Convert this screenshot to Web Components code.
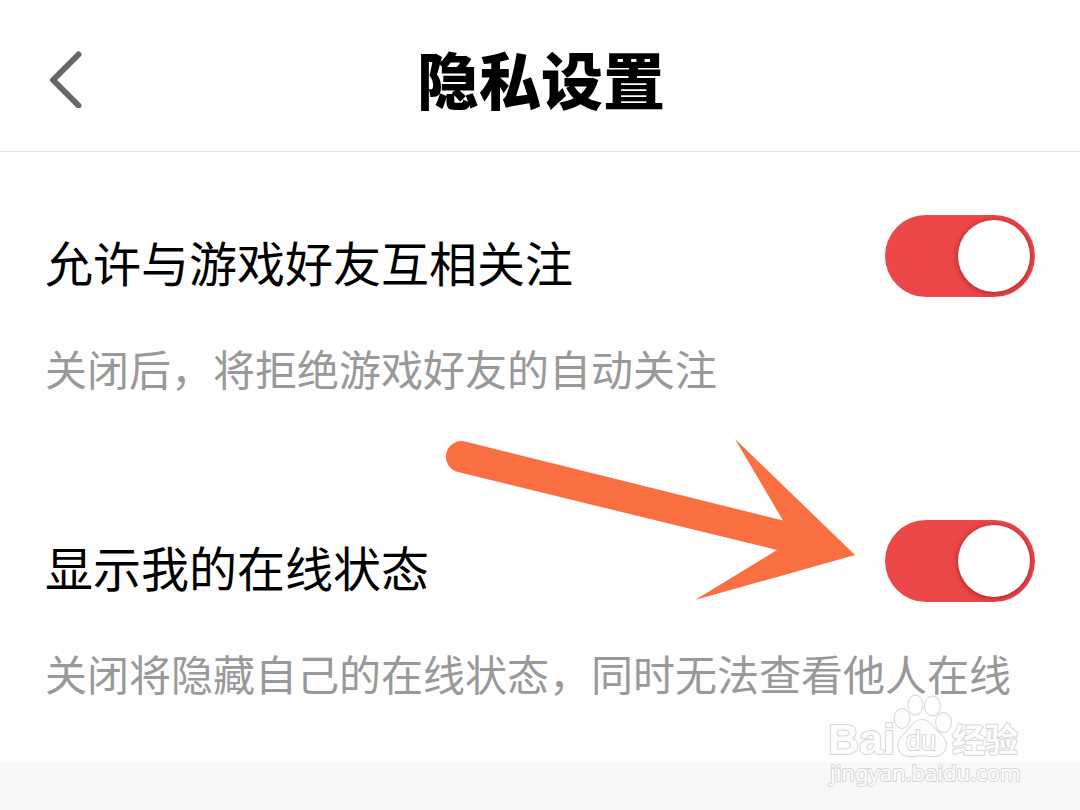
<!DOCTYPE html>
<html lang="zh-CN">
<head>
<meta charset="utf-8">
<meta name="viewport" content="width=device-width, initial-scale=1">
<title>隐私设置</title>
<style>
  html, body { margin: 0; min-height: 100%; }
  body { background: #f8f8f8; font-family: "Noto Sans CJK SC", "Noto Sans", sans-serif; color: #000; }
</style>
</head>
<body>
<privacy-page></privacy-page>

<template id="page-tpl">
  <style>
    :host { display: flex; flex-direction: column; position: relative; min-height: 100vh; overflow: hidden; }
    main { background: #fefefe; }
    section { position: relative; }
    pointer-arrow { position: absolute; right: 225px; top: -18px; }
    site-watermark { position: absolute; right: 52px; top: 692px; }
  </style>
  <nav-header>隐私设置</nav-header>
  <main>
    <setting-row name="follow" label="允许与游戏好友互相关注">关闭后，将拒绝游戏好友的自动关注</setting-row>
    <section>
      <setting-row name="online" label="显示我的在线状态">关闭将隐藏自己的在线状态，同时无法查看他人在线</setting-row>
      <pointer-arrow></pointer-arrow>
    </section>
  </main>
  <site-watermark></site-watermark>
</template>

<template id="header-tpl">
  <style>
    :host { display: block; background: #fefefe; border-bottom: 1px solid #e4e4e4; }
    header { display: grid; grid-template-columns: 96px 1fr 96px; align-items: center; min-height: 151px; padding: 5px 22px 0 24px; box-sizing: border-box; }
    button { display: flex; align-items: center; justify-content: center; width: 82px; height: 84px; padding: 0; border: 0; background: none; cursor: pointer; }
    svg { display: block; }
    h1 { margin: 0; text-align: center; font-size: 62px; line-height: 92px; font-weight: 900; }
  </style>
  <header>
    <button type="button" aria-label="返回">
      <svg width="36" height="60" viewBox="0 0 36 60" fill="none" stroke="#666" stroke-width="6" stroke-linecap="round" stroke-linejoin="round"><path d="M31.500 6.500 6 32 31.500 57.500"/></svg>
    </button>
    <h1><slot></slot></h1>
  </header>
</template>

<template id="row-tpl">
  <style>
    :host { display: block; }
    .row { box-sizing: border-box; min-height: 305px; padding: 63px 45px 48px; }
    .top { display: flex; justify-content: space-between; align-items: flex-start; gap: 24px; }
    label { font-size: 48px; line-height: 72px; padding-top: 10px; }
    p { margin: 41px 0 0; font-size: 42px; line-height: 60px; color: #999; }
    input { appearance: none; flex: none; box-sizing: border-box; width: 150px; height: 82px; margin: 0; padding: 5px; border-radius: 41px; background: #ccc; cursor: pointer; overflow: hidden; }
    input::before { content: ""; display: block; width: 72px; height: 72px; border-radius: 50%; background: #fff; box-shadow: 0 1px 6px rgba(90, 0, 0, .5); }
    input:checked { background: #ec4749; }
    input:checked::before { margin-left: 68px; }
  </style>
  <div class="row">
    <div class="top">
      <label for="switch"></label>
      <input id="switch" type="checkbox" role="switch" checked>
    </div>
    <p><slot></slot></p>
  </div>
</template>

<template id="arrow-tpl">
  <style>:host { display: block; pointer-events: none; } svg { display: block; }</style>
  <svg width="410" height="162" viewBox="0 0 410 162" fill="#fa6f41" aria-hidden="true">
    <path d="M20 2.500 338 81.500 290 0 410 116 250 161 332 111 13 33A15.500 15.500 0 0 1 20 2.500Z"/>
  </svg>
</template>

<template id="watermark-tpl">
  <style>
    :host { display: block; pointer-events: none; }
    svg { display: block; }
    text, .paw { fill: #fdfdfd; stroke: #d6d6d6; stroke-width: 2; stroke-linejoin: round; paint-order: stroke; }
    .bai { font: 700 43px "Liberation Sans", sans-serif; }
    .du { font: 400 27px "Liberation Sans", sans-serif; }
    .cn { font: 700 33px "Noto Sans CJK SC", sans-serif; }
    .url { font: 400 22px "Noto Sans", sans-serif; }
  </style>
  <svg width="204" height="100" viewBox="824 692 204 100">
    <text class="bai" x="828" y="754">Bai</text>
    <g class="paw">
      <ellipse cx="902" cy="718.500" rx="7.500" ry="9.500"/>
      <ellipse cx="915.500" cy="705" rx="7" ry="9.500"/>
      <ellipse cx="932.500" cy="706" rx="7.500" ry="9.500"/>
      <ellipse cx="943.500" cy="722.500" rx="7.500" ry="9.500"/>
      <path d="M922 720C929 720 932 726 936 730C942 736 947 740 946 746C945 754 938 757 931 756C925 755 919 755 913 756C905 757 899 754 898 746C898 739 904 735 908 730C912 725 915 720 922 720Z"/>
    </g>
    <text class="du" x="906" y="750">du</text>
    <text class="cn" x="952" y="752">经验</text>
    <text class="url" x="830" y="781">jingyan.baidu.com</text>
  </svg>
</template>

<script>
  const fill = (host, id) => {
    const root = host.attachShadow({ mode: "open" });
    root.append(document.getElementById(id).content.cloneNode(true));
    return root;
  };

  class SettingRow extends HTMLElement {
    constructor() {
      super();
      fill(this, "row-tpl");
    }
    connectedCallback() {
      this.shadowRoot.querySelector("label").textContent = this.getAttribute("label");
      this.shadowRoot.querySelector("input").name = this.getAttribute("name");
    }
  }

  class NavHeader extends HTMLElement { constructor() { super(); fill(this, "header-tpl"); } }
  class PointerArrow extends HTMLElement { constructor() { super(); fill(this, "arrow-tpl"); } }
  class SiteWatermark extends HTMLElement { constructor() { super(); fill(this, "watermark-tpl"); } }
  class PrivacyPage extends HTMLElement { constructor() { super(); fill(this, "page-tpl"); } }

  customElements.define("setting-row", SettingRow);
  customElements.define("nav-header", NavHeader);
  customElements.define("pointer-arrow", PointerArrow);
  customElements.define("site-watermark", SiteWatermark);
  customElements.define("privacy-page", PrivacyPage);
</script>
</body>
</html>
